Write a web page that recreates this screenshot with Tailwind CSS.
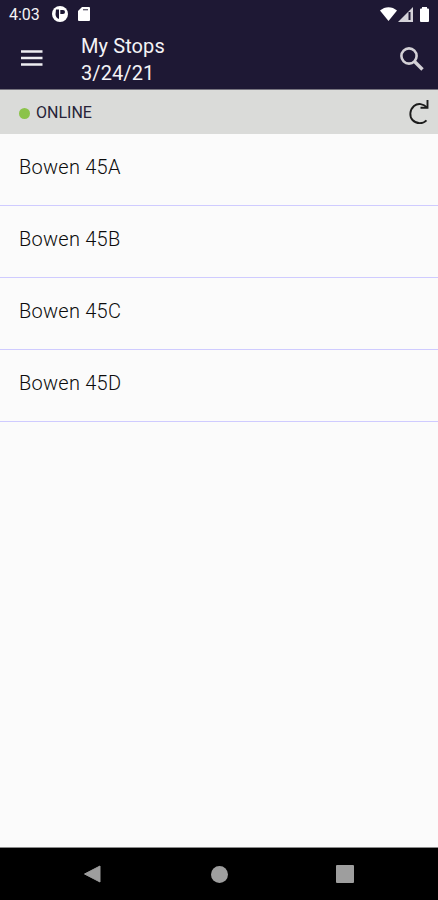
<!DOCTYPE html>
<html lang="en">

<head>
  <meta charset="UTF-8" />
  <meta name="viewport" content="width=device-width, initial-scale=1.0" />
  <title>My Stops</title>
  <script src="https://cdn.jsdelivr.net/npm/@tailwindcss/browser@4"></script>
</head>

<body class="bg-[#fbfbfb] font-[Roboto,sans-serif] h-screen flex flex-col overflow-hidden">

  <header class="bg-[#1e1834] h-[90px] shrink-0 border-b border-[#77747f] text-[#f4f3f6]">
    <!-- Status bar -->
    <div class="h-7 pl-[9px] pr-[9px] flex items-center">
      <span class="text-base leading-7 w-[43px] pt-0.5">4:03</span>
      <svg class="w-4 h-4" viewBox="0 0 16 16">
        <circle cx="8" cy="8" r="8" fill="#fff" />
        <path d="M4 3.500h3v9.500C4.800 12.500 3.500 10.500 3.500 8z" fill="#1e1834" />
        <path d="M8.300 4h2.700a1.500 1.500 0 0 1 0 4H8.300z" fill="#1e1834" />
      </svg>
      <svg class="w-3 h-3.5 ml-2.5" viewBox="0 0 12 14">
        <path d="M4 0h7a1 1 0 0 1 1 1v12a1 1 0 0 1-1 1H1a1 1 0 0 1-1-1V4z" fill="#fff" />
        <path d="M5 2.700h5" stroke="#5c586c" stroke-width="1.300" />
      </svg>
      <div class="ml-auto flex items-center">
        <svg class="w-[17px] h-3.5" viewBox="0 0 17 14">
          <path d="M0 3.500C5 -1 12 -1 17 3.500L8.500 14z" fill="#fff" />
        </svg>
        <svg class="w-[15px] h-[15px] ml-px" viewBox="0 0 15 15">
          <path d="M15 0v15H0z" fill="#d4d2d9" />
          <path d="M11.500 5v8" stroke="#1e1834" stroke-width="2" />
        </svg>
        <svg class="w-[9px] h-[15px] ml-[7px]" viewBox="0 0 9 15">
          <path d="M2 0h5v1.500h1a1 1 0 0 1 1 1V14a1 1 0 0 1-1 1H1a1 1 0 0 1-1-1V2.500a1 1 0 0 1 1-1h1z" fill="#fff" />
        </svg>
      </div>
    </div>

    <!-- Toolbar -->
    <div class="h-[61px] pl-[21px] pr-[14px] flex items-center">
      <svg class="w-[22px] h-4 mb-0.5" viewBox="0 0 22 16">
        <path d="M0 1.500h21.500M0 8h21.500M0 14.500h21.500" stroke="#eeedf1" stroke-width="2.300" />
      </svg>
      <h1 class="ml-[38px] mt-0.5 text-xl leading-[27px] tracking-[0.1px] font-normal">My Stops<br />3/24/21</h1>
      <svg class="w-6 h-6 ml-auto" viewBox="0 0 24 24" fill="none" stroke="#d4d1d6">
        <circle cx="9" cy="9" r="7.600" stroke-width="2.600" />
        <path d="M14.500 14.500l8 8" stroke-width="3.300" />
      </svg>
    </div>
  </header>

  <!-- Connection status -->
  <div class="bg-[#dadbd9] h-11 shrink-0 pl-[19px] pr-[9px] flex items-center text-[#262338]">
    <span class="w-[11px] h-[11px] rounded-full bg-[#8bc34a] mt-0.5"></span>
    <span class="ml-1.5 text-base leading-5 mt-0.5">ONLINE</span>
    <svg class="w-5 h-[26px] ml-auto" viewBox="0 0 20 26" fill="none" stroke="#1c1c1c" stroke-width="1.900">
      <path d="M18 8.500C14.500 4.800 9 3.600 5 7C0.500 11 0.300 17.500 3.500 21C7.500 25.200 14 25 17.500 21.300" />
      <path d="M18.500 1v7.800h-7" />
    </svg>
  </div>

  <ul class="flex-1 text-xl font-light tracking-[0.25px] text-[#0c0c0c]">
    <li class="h-[72px] pl-[19px] pt-5 leading-[27px] border-b border-[#cfcbff]">Bowen 45A</li>
    <li class="h-[72px] pl-[19px] pt-5 leading-[27px] border-b border-[#cfcbff]">Bowen 45B</li>
    <li class="h-[72px] pl-[19px] pt-5 leading-[27px] border-b border-[#cfcbff]">Bowen 45C</li>
    <li class="h-[72px] pl-[19px] pt-5 leading-[27px] border-b border-[#cfcbff]">Bowen 45D</li>
  </ul>

  <!-- System navigation -->
  <nav class="bg-black h-[53px] shrink-0 border-t border-[#8a8a8a] pl-[83px] pr-[84px] flex items-center justify-between">
    <svg class="w-[18px] h-[18px]" viewBox="0 0 18 18">
      <path d="M17 1v16L1.500 9z" fill="#9e9e9e" stroke="#9e9e9e" stroke-linejoin="round" />
    </svg>
    <span class="w-[17px] h-[17px] rounded-full bg-[#9e9e9e] ml-px"></span>
    <span class="w-[18px] h-[18px] rounded-[1px] bg-[#9e9e9e]"></span>
  </nav>

</body>

</html>
